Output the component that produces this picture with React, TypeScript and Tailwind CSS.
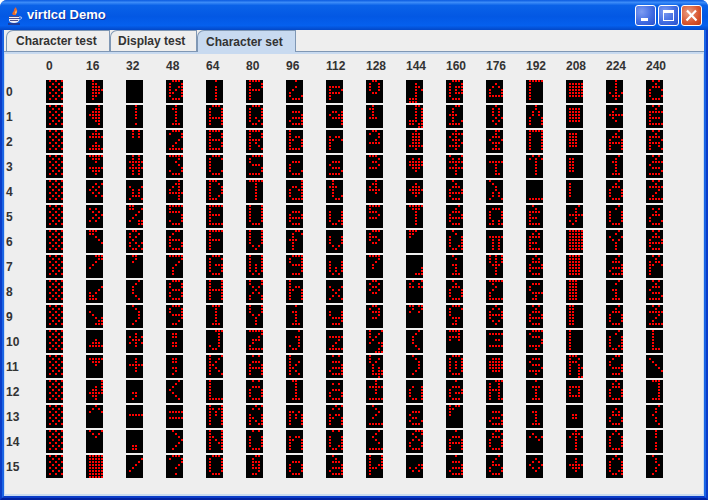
const GLYPHS = [
  // 0-15
  'lalalal0','lalalal0','lalalal0','lalalal0','lalalal0','lalalal0','lalalal0','lalalal0',
  'lalalal0','lalalal0','lalalal0','lalalal0','lalalal0','lalalal0','lalalal0','lalalal0',
  // 16-31
  '8cefec80','26eue620','4ev04ev0','ve40ve40','05aka500','0ka5ak00','so421000','7348g000',
  '0012kos0','00g85370','0004ev00','0ve40000','115dvc40','4ah00000','ha400000','vvvvvvvv',
  // 32-47
  '00000000','44444040','aaa00000','aavavaa0','00haaeh0','op248j30','cik8lid0','c4800000',
  '24888420','84222480','04lel400','044v4400','0000c480','000v0000','00000cc0','01248g00',
  // 48-63
  'ehjlphe0','4c4444e0','eh1248v0','v2421he0','26aiv220','vgu11he0','68guhhe0','v1248880',
  'ehhehhe0','ehhf12c0','0cc0cc00','0cc0c480','248g8420','00v0v000','84212480','eh124040',
  // 64-79
  '40444440','ehhhvhh0','uhhuhhu0','ehggghe0','sihhhis0','vgguggv0','vgguggg0','ehgnhhe0',
  'hhhvhhh0','e44444e0','72222ic0','hikokih0','ggggggv0','hrllhhh0','hhpljhh0','ehhhhhe0',
  // 80-95
  'uhhuggg0','ehhhlid0','uhhukih0','fgge11u0','v4444440','hhhhhhe0','hhhhha40','hhhllla0',
  'hha4ahh0','hhha4440','v12e8gv0','a0ehvhh0','a0ehhhe0','5a0hplj0','a0hhhhe0','68eae2c0',
  // 96-111
  '4048ghe0','00e1fhf0','ggmphhu0','00egghe0','11djhhf0','00ehvge0','698s8880','fhhf11e0',
  'ggmphhh0','40c444e0','20622ic0','ggikoki0','c44444e0','00qllhh0','00mphhh0','00ehhhe0',
  // 112-127
  '00uhugg0','00djf110','00mpggg0','00ege1u0','88s88960','00hhhjd0','00hhha40','00hhlla0',
  '00ha4ah0','00hhf1e0','00v248v0','a0e1fhf0','0a0ehhe0','5a0mphh0','a0hhhjd0','84e1fhf0',
  // 128-143
  'ciiic000','8o88s000','ci24u000','s2c2s000','4cku4000','ugs2s000','egsic000','u2488000',
  'cicic000','cie2c000','hik8j127','gik8abf2','44v440v0','842480v0','248420v0','hhhjtgg0',
  // 144-159
  '046544ss','65555tr3','4eeeev40','0avve400','04eve400','ve444440','sog00000','00001170',
  '9ir00000','r9i00000','24888420','84222480','009hhhd0','00egche0','794ahhe0','0003la00',
  // 160-175
  'ehnlnge0','688s89u0','4fke5u40','hav4v440','84ehvge0','24ehvge0','84hhhjd0','840c44e0',
  '84ehhhe0','ehgge4c0','u2ui0000','ehlllhe0','40ehnge0','mogg0000','40ehvhh0','40e1fhf0',
  // 176-191
  '04ahhv00','4aaa5a40','64ehe4e0','00v44460','g844aah0','0ehhhar0','00vaaaa0','llle4440',
  'v848ggv0','4ahvha40','0v060v00','0evvve00','7iiuiij0','00e1ehf0','69ehhhe0','248ehhe0',
  // 192-207
  'vgggggg0','44aahhh0','vhhhhhh0','al444440','000000v0','84ugsgu0','4augsgu0','4aehvge0',
  '0eggf4c0','a4ehvge0','fge11u40','0ege1u40','40e444e0','00c444e0','08l20000','04aha400',
  // 208-223
  '0vvvvv00','0uuuuu00','0sssss00','0ooooo00','0ggggg00','244v4k80','vvvvvvv0','uuuuuuu0',
  'sssssss0','ooooooo0','ggggggg0','sisijii3','00uiiu00','000cc000','4el44440','044ve400',
  // 224-239
  '4444le40','048v8400','24ehvhh0','24c444e0','24ehhhe0','24hhhhe0','24ha4440','24e1fhf0',
  '240c44e0','24ehhhe0','24hhhjd0','68ghf1e0','4aehhhe0','04aehhe0','4ahhhhe0','4ahhhjd0',
  // 240-255
  'a4ehghe0','a4vgugv0','a4uhuih0','a4fge1u0','a4v248v0','0a4eghe0','a4ehvge0','a4mpggg0',
  'a4ege1u0','a4v248v0','888888e0','0g842100','e22222e0','24484420','44404440','84424480',
];

const rows = Array.from({ length: 16 }, (_, i) => i);

const dotsPath = (glyph: string) => {
  let d = '';
  glyph.split('').forEach((c, y) => {
    const bits = parseInt(c, 32);
    for (let x = 0; x < 5; x++) {
      if (bits & (16 >> x)) d += `M${3 + x * 3} ${y * 3}h2v2h-2z`;
    }
  });
  return d;
};

const LcdChar = ({ code }: { code: number }) => (
  <svg width="17" height="23" viewBox="0 0 17 23" shapeRendering="crispEdges" className="block bg-black">
    <path d={dotsPath(GLYPHS[code])} fill="#ff0000" />
  </svg>
);

const JavaIcon = () => (
  <svg width="16" height="18" viewBox="0 0 16 18" fill="none" className="mt-[1px]">
    <path d="M6 8C4 6 7 5 7 3c0-1 1-2 2-3 0 2 2 3 1 5-1 1-1 2-1 3z" fill="#e8682c" />
    <path d="M8 6c0-1 1-2 1-3 1 1 1 3 0 4z" fill="#f8c86a" />
    <path d="M2 9h10v4c0 2-2 3-5 3s-5-1-5-3z" fill="#eef0fa" />
    <path d="M2 9.500h10M2 11.500h10M3 13.500h8" stroke="#4a4f8c" />
    <path d="M12 10h2c1 0 1 2-2 3" stroke="#c8d0f0" />
    <path d="M1 17h12" stroke="#28307c" strokeWidth="1.500" />
  </svg>
);

const TitleButton = ({ kind }: { kind: 'min' | 'max' | 'close' }) => (
  <div
    className={`flex h-[21px] w-[21px] items-center justify-center rounded-[3px] border border-white ${
      kind === 'close'
        ? 'bg-[radial-gradient(circle_at_35%_35%,#e8a086,#d9552e_60%,#c03a14)]'
        : 'bg-[radial-gradient(circle_at_30%_30%,#7d9cf2,#3e69e0_60%,#2a50cc)]'
    }`}
  >
    <svg width="13" height="13" viewBox="0 0 13 13" fill="none" shapeRendering="crispEdges">
      {kind === 'min' && <path d="M2 9h7v3H2z" fill="#fff" />}
      {kind === 'max' && (
        <>
          <path d="M1.500 1.500h10v10h-10z" stroke="#fff" />
          <path d="M1 2h11v2H1z" fill="#fff" />
        </>
      )}
      {kind === 'close' && (
        <path d="M2 1.500l9.500 10M11 1.500l-9.500 10" stroke="#fff" strokeWidth="2.200" shapeRendering="auto" />
      )}
    </svg>
  </div>
);

const Tab = ({ label, active, className }: { label: string; active?: boolean; className: string }) => (
  <div
    className={`flex items-center rounded-tl-[7px] border border-b-0 border-[#7f97b4] text-[12px] font-bold text-[#333333] ${className} ${
      active ? 'z-10 -mb-px h-[22px] bg-[#c8daf0]' : 'h-[21px] bg-[#eeeeee]'
    }`}
  >
    {label}
  </div>
);

export default function App() {
  return (
    <div
      className="flex h-[500px] w-[708px] flex-col overflow-hidden rounded-t-[7px] bg-[#0a4fd8] text-[#333333]"
      style={{ fontFamily: '"Liberation Sans", Arial, sans-serif' }}
    >
      <div className="flex h-[30px] shrink-0 items-center bg-[linear-gradient(180deg,#0a5ae0_0%,#3c8cf8_8%,#0a62e8_18%,#0358e4_55%,#0560ee_85%,#0348c8_100%)] pl-[7px] pr-[6px]">
        <JavaIcon />
        <span className="ml-[4px] text-[13px] font-bold text-white [text-shadow:1px_1px_0_#0f2f9c]">virtlcd Demo</span>
        <div className="ml-auto flex gap-[2px]">
          <TitleButton kind="min" />
          <TitleButton kind="max" />
          <TitleButton kind="close" />
        </div>
      </div>

      <div className="flex min-h-0 flex-1 flex-col border-x-[2px] border-b-[2px] border-x-[#0a3cc8] border-b-[#0020a0]">
        <div className="flex min-h-0 flex-1 flex-col border-x-[2px] border-b-[2px] border-x-[#1a64e4] border-b-[#0a3cc8] bg-[#eeeeee]">
          <div className="flex h-[22px] shrink-0 items-end border-b border-[#7f97b4] pl-[2px]">
            <Tab label="Character test" className="w-[104px] pl-[9px]" />
            <Tab label="Display test" className="w-[87px] pl-[7px]" />
            <Tab label="Character set" className="w-[99px] pl-[8px]" active />
          </div>

          <div className="flex-1 border-x border-y-[2px] border-[#c8daf0] pl-[1px] pt-[5px]">
            <div className="grid grid-cols-[40px_repeat(16,40px)] grid-rows-[21px_repeat(16,25px)] text-[12px] font-bold">
              <div />
              {rows.map((c) => (
                <div key={c} className="leading-[15px]">
                  {c * 16}
                </div>
              ))}
              {rows.map((r) => (
                <div key={r} className="contents">
                  <div className="pt-[4px] leading-[16px]">{r}</div>
                  {rows.map((c) => (
                    <LcdChar key={c} code={c * 16 + r} />
                  ))}
                </div>
              ))}
            </div>
          </div>
        </div>
      </div>
    </div>
  );
}
